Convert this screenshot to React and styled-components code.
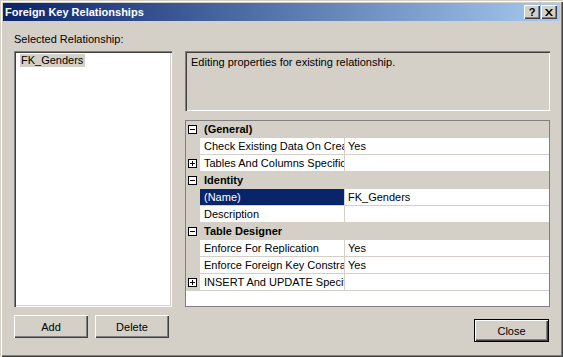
import styled, { createGlobalStyle } from 'styled-components';

const FACE = '#D4D0C8';
const SHADOW = '#808080';
const DARK = '#404040';
const NAVY = '#0A246A';

const GlobalStyle = createGlobalStyle`
  html, body {
    margin: 0;
    padding: 0;
    background: ${FACE};
  }
  body {
    font-family: "Liberation Sans", Arial, sans-serif;
    font-size: 11px;
    color: #000;
  }
`;

const rows = [
  { type: 'category', label: '(General)', open: true },
  { type: 'prop', name: 'Check Existing Data On Creation Or Re-Enabling', value: 'Yes' },
  { type: 'prop', name: 'Tables And Columns Specification', value: '', expandable: true },
  { type: 'category', label: 'Identity', open: true },
  { type: 'prop', name: '(Name)', value: 'FK_Genders', selected: true },
  { type: 'prop', name: 'Description', value: '' },
  { type: 'category', label: 'Table Designer', open: true },
  { type: 'prop', name: 'Enforce For Replication', value: 'Yes' },
  { type: 'prop', name: 'Enforce Foreign Key Constraint', value: 'Yes' },
  { type: 'prop', name: 'INSERT And UPDATE Specification', value: '', expandable: true },
];

const ExpandBox = ({ open }) => (
  <svg width="9" height="9" viewBox="0 0 9 9">
    <rect x="0.5" y="0.5" width="8" height="8" fill="#fff" stroke="#000" />
    <line x1="2" y1="4.5" x2="7" y2="4.5" stroke="#000" />
    {!open && <line x1="4.5" y1="2" x2="4.5" y2="7" stroke="#000" />}
  </svg>
);

const CloseGlyph = () => (
  <svg width="8" height="7" viewBox="0 0 8 7">
    <path d="M0 0h2l2 2.5L6 0h2L5 3.5 8 7H6L4 4.5 2 7H0l3-3.5z" fill="#000" />
  </svg>
);

export default function App() {
  return (
    <>
      <GlobalStyle />
      <Window>
        <TitleBar>
          <Title>Foreign Key Relationships</Title>
          <CaptionButtons>
            <CaptionButton>?</CaptionButton>
            <CaptionButton><CloseGlyph /></CaptionButton>
          </CaptionButtons>
        </TitleBar>

        <Body>
          <Label>Selected Relationship:</Label>
          <div />

          <ListBox>
            <ListItem>FK_Genders</ListItem>
          </ListBox>

          <RightPanels>
            <DescriptionBox>Editing properties for existing relationship.</DescriptionBox>
            <PropGrid>
              {rows.map((r, i) =>
                r.type === 'category' ? (
                  <CategoryRow key={i}>
                    <Margin><ExpandBox open={r.open} /></Margin>
                    <CategoryLabel>{r.label}</CategoryLabel>
                  </CategoryRow>
                ) : (
                  <PropRow key={i}>
                    <Margin>{r.expandable && <ExpandBox open={false} />}</Margin>
                    <NameCell $selected={r.selected}>{r.name}</NameCell>
                    <ValueCell>{r.value}</ValueCell>
                  </PropRow>
                )
              )}
            </PropGrid>
          </RightPanels>

          <ButtonRow>
            <Button>Add</Button>
            <Button>Delete</Button>
          </ButtonRow>
          <CloseRow>
            <Button $default>Close</Button>
          </CloseRow>
        </Body>
      </Window>
    </>
  );
}

const Window = styled.div`
  width: 563px;
  height: 357px;
  box-sizing: border-box;
  padding: 3px;
  background: ${FACE};
  box-shadow: inset 1px 1px 0 ${FACE}, inset 2px 2px 0 #fff,
    inset -1px -1px 0 ${DARK}, inset -2px -2px 0 ${SHADOW};
  display: flex;
  flex-direction: column;
`;

const TitleBar = styled.div`
  height: 18px;
  display: flex;
  align-items: center;
  justify-content: space-between;
  padding: 0 3px 0 2px;
  background: linear-gradient(to right, ${NAVY} 0%, #A6CAF0 100%);
`;

const Title = styled.div`
  color: #fff;
  font-weight: bold;
  font-size: 11px;
  line-height: 13px;
`;

const CaptionButtons = styled.div`
  display: flex;
  gap: 1px;
`;

const CaptionButton = styled.div`
  width: 16px;
  height: 14px;
  box-sizing: border-box;
  display: flex;
  align-items: center;
  justify-content: center;
  background: ${FACE};
  box-shadow: inset 1px 1px 0 #fff, inset -1px -1px 0 ${DARK}, inset -2px -2px 0 ${SHADOW};
  font-weight: bold;
  font-size: 11px;
  line-height: 11px;
`;

const Body = styled.div`
  flex: 1;
  display: grid;
  grid-template-columns: 158px 365px;
  grid-template-rows: 18px 256px 27px;
  column-gap: 13px;
  row-gap: 0;
  padding: 12px 10px 0 11px;
`;

const Label = styled.div`
  line-height: 13px;
`;

const sunken = `
  box-shadow: inset 1px 1px 0 ${SHADOW}, inset 2px 2px 0 ${DARK},
    inset -1px -1px 0 #fff, inset -2px -2px 0 ${FACE};
`;

const ListBox = styled.div`
  background: #fff;
  ${sunken}
  padding: 3px 0 0 6px;
`;

const ListItem = styled.span`
  display: inline-block;
  background: ${FACE};
  padding: 0 2px 0 1px;
  line-height: 13px;
`;

const RightPanels = styled.div`
  display: flex;
  flex-direction: column;
  gap: 9px;
`;

const DescriptionBox = styled.div`
  height: 60px;
  box-sizing: border-box;
  ${sunken}
  padding: 5px 6px;
  line-height: 13px;
`;

const PropGrid = styled.div`
  flex: 1;
  border: 1px solid ${SHADOW};
  background: #fff;
  display: flex;
  flex-direction: column;
  overflow: hidden;
`;

const CategoryRow = styled.div`
  display: grid;
  grid-template-columns: 14px 1fr;
  height: 17px;
  box-sizing: border-box;
  border-bottom: 1px solid ${FACE};
  background: ${FACE};
  align-items: center;
`;

const Margin = styled.div`
  display: flex;
  align-items: center;
  justify-content: flex-start;
  padding-left: 2px;
  height: 100%;
  background: ${FACE};
`;

const CategoryLabel = styled.div`
  font-weight: bold;
  padding-left: 4px;
`;

const PropRow = styled.div`
  display: grid;
  grid-template-columns: 14px 144px 1fr;
  height: 17px;
  box-sizing: border-box;
  border-bottom: 1px solid ${FACE};
`;

const NameCell = styled.div`
  padding-left: 4px;
  white-space: nowrap;
  overflow: hidden;
  line-height: 16px;
  background: ${(p) => (p.$selected ? NAVY : '#fff')};
  color: ${(p) => (p.$selected ? '#fff' : '#000')};
`;

const ValueCell = styled.div`
  border-left: 1px solid ${FACE};
  padding-left: 3px;
  white-space: nowrap;
  overflow: hidden;
  line-height: 16px;
`;

const ButtonRow = styled.div`
  display: flex;
  gap: 7px;
  padding-top: 8px;
  height: 23px;
`;

const CloseRow = styled.div`
  display: flex;
  justify-content: flex-end;
  padding-top: 12px;
  padding-right: 1px;
`;

const Button = styled.div`
  width: ${(p) => (p.$default ? '75px' : '74px')};
  height: ${(p) => (p.$default ? '23px' : '23px')};
  box-sizing: border-box;
  display: flex;
  align-items: center;
  justify-content: center;
  background: ${FACE};
  border: ${(p) => (p.$default ? '1px solid #000' : 'none')};
  box-shadow: inset 1px 1px 0 #fff, inset -1px -1px 0 ${DARK}, inset -2px -2px 0 ${SHADOW};
`;
